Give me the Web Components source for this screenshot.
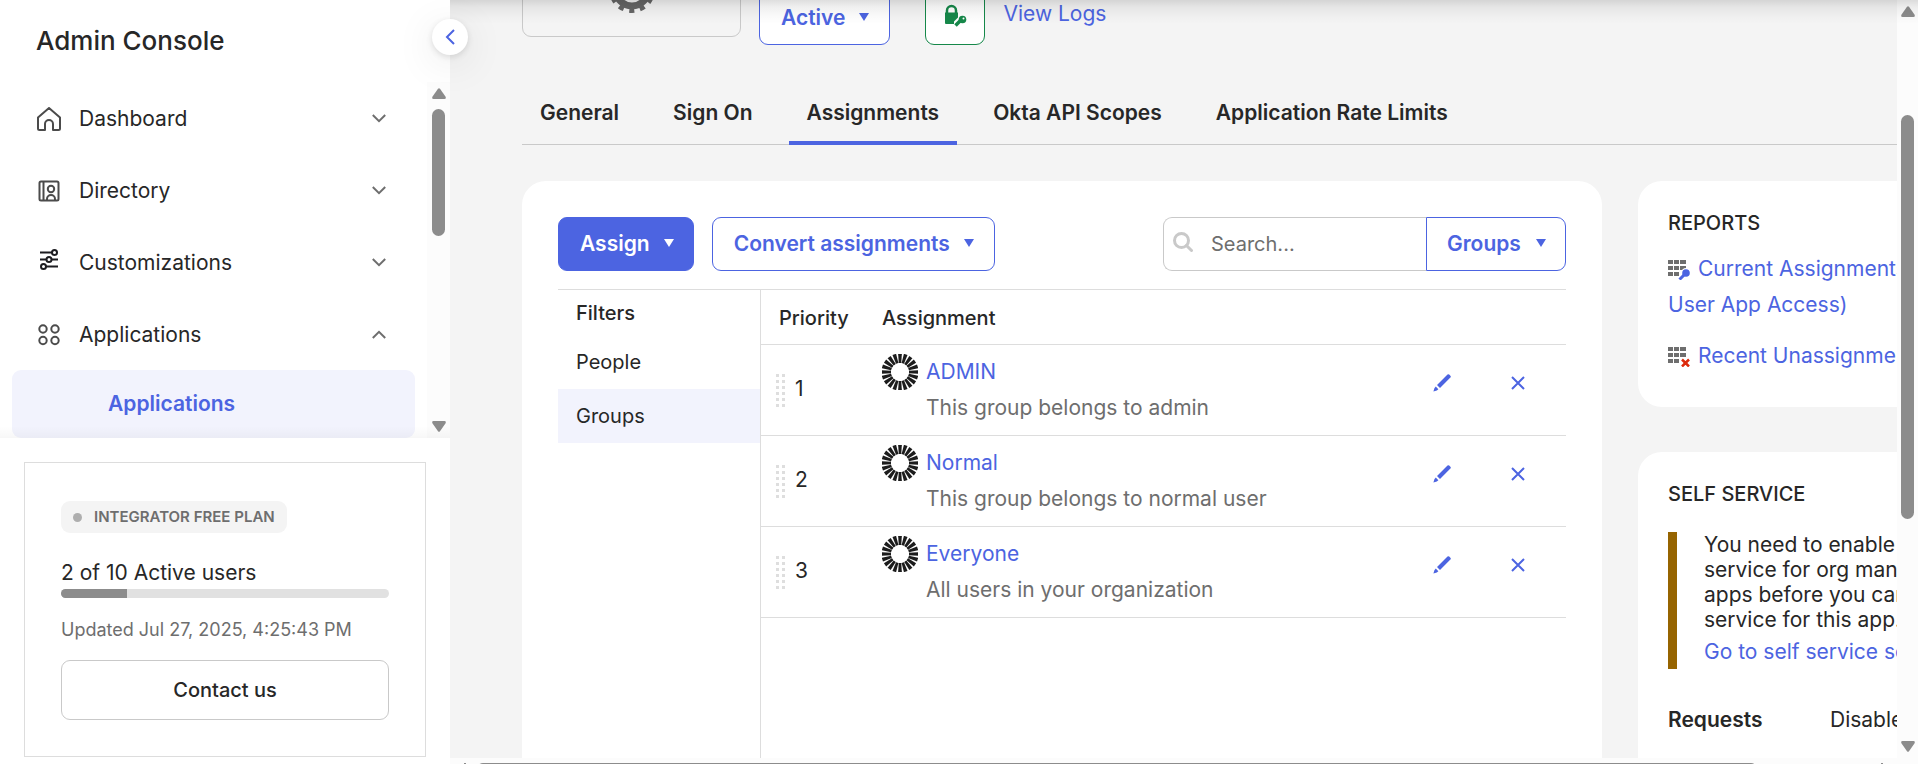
<!DOCTYPE html>
<html lang="en">
<head>
<meta charset="utf-8">
<title>Admin Console</title>
<style>
  :root {
    --ink: #272727; --muted: #6e6e6e; --accent: #4c64e1; --line: #dddddd; --line-dark: #c9c9c9;
    --ground: #f4f4f4; --tint: #f2f3fd; --rail: #fcfcfc; --thumb: #8c8c8c; --green: #16884a;
  }
  html, body { height: 100%; margin: 0; }
  body { font: 400 20px/36px Inter, "Noto Sans", sans-serif; color: var(--ink); overflow: hidden; background: #fff; }
</style>
</head>
<body>
<console-app>
  <side-nav slot="nav">
    <nav-item icon="home">Dashboard</nav-item>
    <nav-item icon="directory">Directory</nav-item>
    <nav-item icon="sliders">Customizations</nav-item>
    <nav-item icon="apps" open>Applications</nav-item>
    <nav-subitem>Applications</nav-subitem>
    <plan-card slot="footer"></plan-card>
  </side-nav>
  <app-header></app-header>
  <tab-bar></tab-bar>
  <page-columns>
    <assignment-panel></assignment-panel>
    <side-card slot="aside" heading="REPORTS"><report-list></report-list></side-card>
    <side-card slot="aside" heading="SELF SERVICE"><self-service></self-service></side-card>
  </page-columns>
</console-app>

<script>
const BASE = `<style>
  *, *::before, *::after { box-sizing: border-box; }
  :host { display: block; box-sizing: border-box; }
  a { color: var(--accent); text-decoration: none; }
  button, input, select { font: inherit; color: inherit; margin: 0; cursor: pointer; }
  svg { display: block; flex: none; }
</style>`;

const define = (name, markup) => customElements.define(name, class extends HTMLElement {
  constructor() {
    super();
    const html = typeof markup === 'function' ? markup(this) : markup;
    this.attachShadow({ mode: 'open' }).innerHTML = BASE + html;
  }
});

const ICONS = {
  home: `<svg width="24" height="24" viewBox="0 0 24 24" fill="none" stroke="#4b4b4b" stroke-width="2" stroke-linejoin="round"><path d="M1 10.500 12 1l11 9.500V21.500a1.500 1.500 0 0 1-1.500 1.500H16V17a4 4 0 0 0-8 0v6H2.500A1.500 1.500 0 0 1 1 21.500Z"/></svg>`,
  directory: `<svg width="24" height="24" viewBox="0 0 24 24" fill="none" stroke="#4b4b4b" stroke-width="2"><rect x="2.500" y="2.500" width="19" height="19" rx="1.500"/><path d="M6.500 3v18"/><circle cx="14" cy="10" r="3.200"/><path d="M10 21v-1a4 4 0 0 1 8 0v1"/></svg>`,
  sliders: `<svg width="24" height="24" viewBox="0 3 24 24" overflow="visible" fill="none" stroke="#1d1d21" stroke-width="2"><path d="M3 4.500h12M3 11.500h6M15 11.500h6M9 18.500h12"/><circle cx="17.500" cy="4.500" r="2.500"/><circle cx="12" cy="11.500" r="2.500"/><circle cx="6.500" cy="18.500" r="2.500"/></svg>`,
  apps: `<svg width="24" height="24" viewBox="0 0 24 24" fill="none" stroke="#4b4b4b" stroke-width="2"><circle cx="6" cy="6" r="3.700"/><circle cx="18" cy="6" r="3.700"/><circle cx="6" cy="17.500" r="3.700"/><circle cx="18" cy="17.500" r="3.700"/></svg>`
};
const CARET = `<svg class="caret" width="10" height="8" viewBox="0 0 10 8" aria-hidden="true"><path d="M0 0h10L5 8Z" fill="currentColor"/></svg>`;

/* Page frame: navigation column, scrolled page, and the page's scroll rails. */
define('console-app', `<style>
  :host { display: flex; height: 100vh; }
  .main { position: relative; flex: 1; min-width: 0; display: grid; grid-template: minmax(0, 1fr) 6px / minmax(0, 1fr) 21px; background: var(--ground); }
  main { overflow: hidden; padding-left: 72px; }
  .fade { position: absolute; inset: 0 0 auto 0; height: 24px; pointer-events: none;
    background: linear-gradient(rgba(0,0,0,.13), rgba(0,0,0,.06) 30%, rgba(0,0,0,.02) 70%, transparent); }
  .collapse { position: absolute; left: -18px; top: 19px; width: 36px; height: 36px; border: 0; border-radius: 50%; padding: 0; background: #fff;
    display: grid; place-items: center; color: var(--accent); z-index: 2;
    box-shadow: 0 2px 6px rgba(0,0,0,.12), 0 8px 40px rgba(0,0,0,.10); }
  .bottom { grid-column: 1 / -1; display: flex; justify-content: space-between; background: var(--rail); overflow: hidden; padding: 5px 35px 0 14px; }
  .bottom i { flex: 1; height: 12px; margin: 0 124px 0 11px; border-radius: 6px; background: var(--thumb); }
  .bottom b { width: 2px; height: 12px; background: var(--thumb); }
</style>
<slot name="nav"></slot>
<div class="main">
  <main><slot></slot></main>
  <scroll-rail before="88" size="404" after="212" gap="6"></scroll-rail>
  <div class="bottom"><b></b><i></i><b></b></div>
  <div class="fade"></div>
  <button class="collapse" aria-label="Collapse navigation"><svg width="10" height="16" viewBox="0 0 10 16" fill="none" stroke="currentColor" stroke-width="2"><path d="M9 1 2 8l7 7"/></svg></button>
</div>`);

/* Vertical scroll rail; before / size / after are the proportions of its track. */
define('scroll-rail', el => `<style>
  :host { display: flex; flex-direction: column; align-items: center; background: var(--rail); padding: ${el.getAttribute('gap')}px 0; }
  i { width: 13px; border-radius: 7px; background: var(--thumb); flex: ${el.getAttribute('size')} 1 0; }
  .b { flex: ${el.getAttribute('before')} 1 0; } .a { flex: ${el.getAttribute('after')} 1 0; }
</style>
<svg width="14" height="21" viewBox="0 0 14 21"><path d="M6 .8Q7-.5 8 .8l5.600 8q.8 2.200-1.200 2.200H1.600Q-.4 11 .4 8.800Z" fill="#8c8c8c"/></svg>
<span class="b"></span><i></i><span class="a"></span>
<svg width="14" height="21" viewBox="0 0 14 21"><path d="M6 20.200Q7 21.500 8 20.200l5.600-8q.8-2.200-1.200-2.200H1.600Q-.4 10 .4 12.200Z" fill="#8c8c8c"/></svg>`);

define('side-nav', `<style>
  :host { flex: none; width: 450px; display: flex; flex-direction: column; background: #fff; }
  h1 { margin: 0; flex: none; padding: 0 36px; font-size: 26px; line-height: 82px; font-weight: 500; }
  .scroller { position: relative; display: flex; height: 356px; flex: none; }
  nav { flex: 1; min-width: 0; overflow: hidden; padding: 0 12px; }
  scroll-rail { width: 23px; }
  .scroller::after { content: ""; position: absolute; inset: auto 0 0 0; height: 12px; background: linear-gradient(transparent, rgba(0,0,0,.03)); }
</style>
<h1>Admin Console</h1>
<div class="scroller"><nav aria-label="Main"><slot></slot></nav><scroll-rail before="0" size="127" after="175" gap="6"></scroll-rail></div>
<slot name="footer"></slot>`);

define('nav-item', el => `<style>
  button { display: flex; align-items: center; gap: 18px; width: 100%; height: 72px; border: 0; background: none; padding: 1px 29px 0 25px; text-align: left; font-size: 21px; }
  span { flex: 1; }
</style>
<button aria-expanded="${el.hasAttribute('open')}">${ICONS[el.getAttribute('icon')]}<span><slot></slot></span>
<svg width="14" height="9" viewBox="0 0 14 9" fill="none" stroke="#6e6e6e" stroke-width="2"><path d="${el.hasAttribute('open') ? 'M.8 8 7 1.800 13.200 8' : 'M.8 1 7 7.200 13.200 1'}"/></svg></button>`);

define('nav-subitem', `<style>
  a { display: block; line-height: 68px; padding-left: 96px; border-radius: 9px; background: var(--tint); font-size: 21px; font-weight: 600; }
</style><a href="#applications" aria-current="page"><slot></slot></a>`);

define('plan-card', `<style>
  :host { margin: 24px 24px 0; padding: 38px 36px 36px; border: 1px solid var(--line); }
  .badge { display: inline-flex; align-items: center; gap: 12px; height: 32px; padding: 0 12px; border-radius: 9px; background: var(--ground); color: var(--muted); font-size: 15px; font-weight: 600; line-height: 32px; }
  .badge::before { content: ""; width: 9px; height: 9px; border-radius: 50%; background: #aeaeae; }
  .wrap { display: flex; }
  label { display: block; margin-top: 24px; font-size: 21px; line-height: 32px; }
  progress { display: block; width: 100%; height: 9px; appearance: none; border: 0; border-radius: 5px; overflow: hidden; background: #e1e1e1; }
  progress::-webkit-progress-bar { background: #e1e1e1; }
  progress::-webkit-progress-value { background: #8c8c8c; }
  p { margin: 18px 0 16px; font-size: 18px; line-height: 28px; color: var(--muted); }
  button { display: block; width: 100%; height: 60px; border: 1px solid var(--line-dark); border-radius: 9px; background: #fff; font-size: 20px; font-weight: 500; }
</style>
<div class="wrap"><span class="badge">INTEGRATOR FREE PLAN</span></div>
<label for="usage">2 of 10 Active users</label>
<progress id="usage" max="10" value="2"></progress>
<p>Updated Jul 27, 2025, 4:25:43 PM</p>
<button>Contact us</button>`);

define('menu-button', `<style>
  button { display: flex; align-items: center; gap: 14px; height: 54px; padding: 0 20px 0 21px; border: 1px solid var(--accent); border-radius: 9px; background: #fff; color: var(--accent); font-size: 21px; font-weight: 600; white-space: nowrap; }
  :host([primary]) button { background: var(--accent); color: #fff; padding-right: 19px; }
  .caret { margin-bottom: 2px; }
</style><button aria-haspopup="menu"><slot></slot>${CARET}</button>`);

define('app-header', `<style>
  /* The page is scrolled, so only the lower part of the header shows. */
  :host { display: flex; align-items: flex-end; height: 45px; }
  .logo { width: 219px; height: 120px; margin: 0 18px 8px 0; border: 1px solid var(--line-dark); border-radius: 9px; display: flex; align-items: flex-end; justify-content: center; padding-bottom: 22px; }
  .key { width: 60px; height: 54px; margin: 0 18px 0 35px; border: 1px solid var(--green); border-radius: 9px; background: #fff; display: grid; place-items: center; padding: 0 0 6px; color: var(--green); }
  a { font-size: 21px; margin-bottom: 13px; }
</style>
<div class="logo"><svg width="48" height="48" viewBox="-24 -24 48 48"><circle r="16" fill="none" stroke="#666" stroke-width="7"/><circle r="20" fill="none" stroke="#666" stroke-width="6" stroke-dasharray="5 5.472" stroke-dashoffset="2.500"/></svg></div>
<menu-button>Active</menu-button>
<button class="key" aria-label="Security"><svg width="24" height="24" viewBox="0 0 24 24"><path d="M4 10V7.500a4.500 4.500 0 0 1 9 0V10" fill="none" stroke="currentColor" stroke-width="2.500"/><path d="M2 9.500h13v5l-4 4V21H3a1 1 0 0 1-1-1Z" fill="currentColor"/><circle cx="19.500" cy="16.500" r="3.800" fill="currentColor"/><path d="m18 17-5.500 5.500" stroke="currentColor" stroke-width="3.500" fill="none"/><circle cx="20.500" cy="15.500" r="1" fill="#fff"/></svg></button>
<a href="#logs">View Logs</a>`);

define('tab-bar', `<style>
  nav { display: flex; gap: 18px; margin-top: 36px; border-bottom: 1px solid var(--line-dark); }
  a { line-height: 56px; padding: 4px 18px 0; font-size: 21px; font-weight: 600; color: var(--ink); white-space: nowrap; margin-bottom: -1px; border-bottom: 4px solid transparent; }
  a[aria-current] { border-color: var(--accent); }
</style>
<nav aria-label="Application"><a href="#general">General</a><a href="#signon">Sign On</a><a href="#assignments" aria-current="page">Assignments</a><a href="#scopes">Okta API Scopes</a><a href="#limits">Application Rate Limits</a></nav>`);

/* The aside runs on past the right edge of the scrolled page. */
define('page-columns', `<style>
  :host { display: flex; align-items: flex-start; gap: 36px; margin: 36px -126px 0 0; }
  .lead { flex: 1; min-width: 0; }
  .aside { flex: none; width: 385px; display: flex; flex-direction: column; gap: 45px; }
</style><div class="lead"><slot></slot></div><div class="aside"><slot name="aside"></slot></div>`);

const GROUPS = [
  ['ADMIN', 'This group belongs to admin'],
  ['Normal', 'This group belongs to normal user'],
  ['Everyone', 'All users in your organization']
];
const rays = Array.from({ length: 20 }, (_, i) => `<path d="M-1.200-9H1.200L1.900-18.500H-1.900Z" transform="rotate(${i * 18})"/>`).join('');
const BURST = `<svg width="36" height="36" viewBox="-18 -18 36 36" fill="#1c1c1c" aria-hidden="true">${rays}<circle r="10" fill="none" stroke="#1c1c1c" stroke-opacity=".35"/></svg>`;
const GRIP = `<svg width="9" height="33" viewBox="0 0 9 33" fill="#dedede" aria-hidden="true">${[0, 6, 12, 18, 24, 30].map(y => `<path d="M0 ${y}h3v3H0ZM6 ${y}h3v3H6Z"/>`).join('')}</svg>`;

define('assignment-panel', `<style>
  :host { padding: 36px 36px 0; border-radius: 24px; background: #fff; }
  .bar { display: flex; gap: 18px; padding-bottom: 18px; border-bottom: 1px solid var(--line); }
  .find { display: flex; margin-left: auto; position: relative; }
  .find > svg { position: absolute; left: 10px; top: 15px; }
  input { width: 263px; height: 54px; padding: 0 12px 0 47px; border: 1px solid var(--line-dark); border-right: 0; border-radius: 9px 0 0 9px; font-size: 20px; outline: 0; cursor: text; }
  input::placeholder { color: var(--muted); opacity: 1; }
  .pick { position: relative; color: var(--accent); }
  .pick .caret { position: absolute; right: 20px; top: 22px; pointer-events: none; }
  select { appearance: none; width: 140px; height: 54px; padding: 0 40px 0 20px; border: 1px solid var(--accent); border-radius: 0 9px 9px 0; background: #fff; font-size: 21px; font-weight: 600; }
  .body { display: flex; min-height: 620px; }
  .filters { flex: none; width: 203px; border-right: 1px solid var(--line); }
  h2 { margin: 0; padding: 2px 18px 0; font-size: 20px; line-height: 43px; font-weight: 500; }
  .filters a { display: block; padding: 0 18px; line-height: 54px; font-size: 20px; color: var(--ink); }
  .filters a[aria-current] { background: var(--tint); }
  table { flex: 1; align-self: flex-start; border-collapse: separate; border-spacing: 0; table-layout: fixed; width: 100%; font-size: 21px; }
  th, td { padding: 0 18px; border-bottom: 1px solid var(--line); text-align: left; }
  th { padding-top: 2px; font-weight: 500; font-size: 20px; line-height: 52px; }
  th:first-child { width: 103px; } th:nth-child(3) { width: 178px; }
  td { padding-top: 9px; padding-bottom: 9px; }
  td:first-child { padding-left: 15px; }
  .rank, .group { display: flex; align-items: center; gap: 10px; }
  .group { align-items: flex-start; gap: 8px; }
  .rank span { margin-bottom: 2px; }
  .group p { margin: 0; color: var(--muted); white-space: nowrap; }
  .acts { display: flex; gap: 60px; padding: 0 23px 14px 24px; justify-content: flex-end; align-items: center; }
  .acts button { border: 0; background: none; padding: 0; color: var(--accent); }
</style>
<div class="bar">
  <menu-button primary>Assign</menu-button><menu-button>Convert assignments</menu-button>
  <div class="find">
    <svg width="20" height="20" viewBox="0 0 20 20" fill="none" stroke="#c9c9c9" stroke-width="3"><circle cx="8.500" cy="8.500" r="7"/><path d="m13.500 13.500 5 5" stroke-linecap="round"/></svg>
    <input type="search" placeholder="Search..." aria-label="Search assignments">
    <div class="pick"><select aria-label="Search in"><option>Groups</option><option>People</option></select>${CARET}</div>
  </div>
</div>
<div class="body">
  <nav class="filters" aria-label="Filters"><h2>Filters</h2><a href="#people">People</a><a href="#groups" aria-current="true">Groups</a></nav>
  <table>
    <thead><tr><th scope="col">Priority</th><th scope="col">Assignment</th><th aria-label="Actions"></th></tr></thead>
    <tbody>${GROUPS.map(([name, note], i) => `<tr>
      <td><div class="rank">${GRIP}<span>${i + 1}</span></div></td>
      <td><div class="group">${BURST}<div><a href="#${name}">${name}</a><p>${note}</p></div></div></td>
      <td><div class="acts">
        <button aria-label="Edit ${name}"><svg width="18" height="18" viewBox="0 0 18 18" fill="currentColor"><path d="m14.500.600a1.200 1.200 0 0 1 1.700 0l1.200 1.200a1.200 1.200 0 0 1 0 1.700L7 14 4 11Z"/><path d="m2.800 12.600 2.600 2.600-1.600 1.400-3.400 1 1-3.400Z"/></svg></button>
        <button aria-label="Remove ${name}"><svg width="14" height="14" viewBox="0 0 14 14" stroke="currentColor" stroke-width="2" fill="none"><path d="m1 1 12 12M13 1 1 13"/></svg></button>
      </div></td></tr>`).join('')}</tbody>
  </table>
</div>`);

define('side-card', el => `<style>
  :host { padding: 24px 30px 33px; border-radius: 24px; background: #fff; }
  h2 { margin: 0 0 10px; font-size: 20px; line-height: 36px; font-weight: 500; }
</style><h2>${el.getAttribute('heading')}</h2><slot></slot>`);

const GRID = `<path d="M0 0h5v4H0ZM6 0h5v4H6ZM12 0h6v4h-6ZM0 6h5v4H0ZM6 6h5v4H6ZM12 6h6v4h-6ZM0 12h5v4H0ZM6 12h5v4H6Z" fill="#6e6e6e"/>`;
define('report-list', `<style>
  ul { list-style: none; margin: 0; padding: 0; display: grid; gap: 15px; }
  li { line-height: 36px; font-size: 21px; white-space: nowrap; }
  svg { display: inline-block; vertical-align: -4px; margin-right: 8px; }
</style>
<ul>
  <li><svg width="22" height="20" viewBox="0 0 22 20">${GRID}<circle cx="18" cy="13" r="5" fill="#fff"/><circle cx="18" cy="13" r="3.800" fill="#4c64e1"/><path d="m17 14-5.500 5.500" stroke="#4c64e1" stroke-width="3"/></svg><a href="#current">Current Assignments (Current<br>User App Access)</a></li>
  <li><svg width="22" height="20" viewBox="0 0 22 20">${GRID}<path d="m14 12.500 7 7M21 12.500l-7 7" stroke="#dc2a0c" stroke-width="2.500"/></svg><a href="#recent">Recent Unassignments</a></li>
</ul>`);

define('self-service', `<style>
  .note { margin-top: 20px; padding-left: 27px; border-left: 9px solid #966400; }
  p { margin: 0; line-height: 25px; padding-bottom: 2px; font-size: 21px; }
  .note a { display: block; line-height: 35px; font-size: 21px; white-space: nowrap; }
  dl { display: grid; grid-template-columns: 162px 1fr; margin: 33px 0 40px; font-size: 21px; }
  dt { font-weight: 600; } dd { margin: 0; }
</style>
<div class="note"><p>You need to enable self service for org managed apps before you can use self service for this app.</p><a href="#self">Go to self service settings</a></div>
<dl><dt>Requests</dt><dd>Disabled</dd></dl>`);
</script>
</body>
</html>
